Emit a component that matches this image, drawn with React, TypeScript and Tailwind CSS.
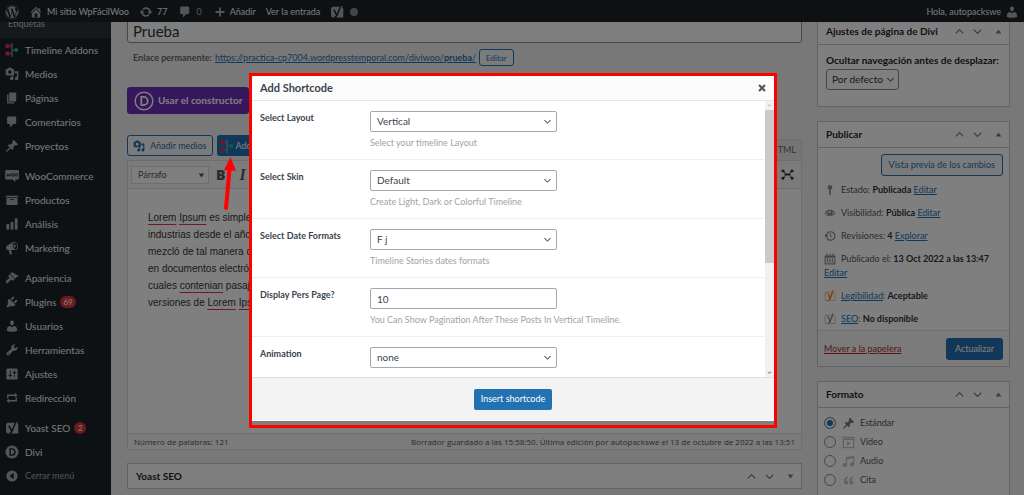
import React from 'react';
import { FaWordpress, FaYoast } from 'react-icons/fa';

const PATHS = {
  home: 'M16 8.5l1.53 1.53-1.06 1.06L10 4.6l-6.47 6.49-1.06-1.06L10 2.5l4 4v-2h2v4zm-6-2.46l6 5.99V18H4v-5.97zM12 17v-5H8v5h4z',
  update:
    'M10.2 3.28c3.53 0 6.43 2.61 6.92 6h2.08l-3.5 4-3.5-4h2.32c-.45-1.97-2.21-3.45-4.32-3.45-1.45 0-2.73.71-3.54 1.78L4.95 5.66C6.23 4.2 8.11 3.28 10.2 3.28zm-.4 13.44c-3.52 0-6.43-2.61-6.92-6H.8l3.5-4c1.17 1.33 2.33 2.67 3.5 4H5.48c.45 1.97 2.21 3.45 4.32 3.45 1.45 0 2.73-.71 3.54-1.78l1.71 1.95c-1.28 1.46-3.15 2.38-5.25 2.38z',
  comment: 'M5 2h9c1.1 0 2 .9 2 2v7c0 1.1-.9 2-2 2h-2l-5 5v-5H5c-1.1 0-2-.9-2-2V4c0-1.1.9-2 2-2z',
  plus: 'M17.5 8.5v3h-6v6h-3v-6h-6v-3h6v-6h3v6z',
  media:
    'M13 11V4c0-.55-.45-1-1-1h-1.67L9 1H5L3.67 3H2c-.55 0-1 .45-1 1v7c0 .55.45 1 1 1h10c.55 0 1-.45 1-1zM7 4.5c1.38 0 2.5 1.12 2.5 2.5S8.38 9.5 7 9.5 4.5 8.38 4.5 7 5.62 4.5 7 4.5zM14 6h5v10.5c0 1.38-1.12 2.5-2.5 2.5S14 17.88 14 16.5s1.12-2.5 2.5-2.5c.17 0 .34.02.5.05V9h-3V6zm-4 8.05V13h2v3.5c0 1.38-1.12 2.5-2.5 2.5S7 17.88 7 16.5 8.12 14 9.5 14c.17 0 .34.02.5.05z',
  page: 'M6 15V2h10v13H6zm-1 1h8v2H3V5h2v11z',
  pin: 'M10.44 3.02l1.82-1.82 6.36 6.35-1.83 1.82c-1.05-.68-2.48-.57-3.41.36l-.75.75c-.92.93-1.04 2.35-.35 3.41l-1.83 1.82-2.41-2.41-2.8 2.79c-.42.42-3.38 2.71-3.8 2.29s1.86-3.39 2.28-3.81l2.79-2.79L4.1 9.36l1.83-1.82c1.05.69 2.48.57 3.4-.36l.75-.75c.93-.92 1.05-2.35.36-3.41z',
  archive: 'M19 4v2H1V4h18zM2 7h16v10H2V7zm11 3V9H7v1h6z',
  chart: 'M18 18V2h-4v16h4zm-6 0V7H8v11h4zm-6 0v-8H2v8h4z',
  megaphone:
    'M18.15 5.94c.46 1.62.38 3.22-.02 4.48-.42 1.28-1.26 2.18-2.3 2.48-.16.06-.26.06-.4.06-.06.02-.12.02-.18.02-.06.02-.14.02-.22.02h-6.8l2.22 5.5c.02.14-.06.26-.14.34-.08.1-.24.16-.34.16H6.95c-.1 0-.26-.06-.34-.16-.08-.08-.16-.2-.14-.34l-1-5.5H4.25l-.02-.02c-.5.06-1.08-.18-1.54-.62s-.88-1.08-1.06-1.88c-.24-.8-.2-1.56-.02-2.2.18-.62.58-1.08 1.06-1.3l.02-.02 9-5.4c.1-.06.18-.1.24-.16.06-.04.14-.08.24-.12.16-.08.28-.12.5-.18 1.04-.3 2.24.1 3.22.98s1.84 2.24 2.26 3.86zm-2.58 5.98h-.02c.4-.1.74-.34 1.04-.7.58-.7.86-1.76.86-3.04 0-.64-.1-1.3-.28-1.98-.34-1.36-1.02-2.5-1.78-3.24s-1.68-1.1-2.46-.88c-.82.22-1.4.96-1.7 2-.32 1.04-.28 2.36.06 3.72.38 1.36 1 2.5 1.8 3.24.78.74 1.62 1.1 2.48.88zm-2.54-7.08c.22-.04.42-.02.62.04.38.16.76.48 1.02 1s.42 1.2.42 1.78c0 .3-.04.56-.12.8-.18.48-.44.84-.86.94-.34.1-.8-.06-1.14-.4s-.64-.86-.78-1.5c-.18-.62-.12-1.24.02-1.72s.48-.84.82-.94z',
  appearance:
    'M14.48 11.06L7.41 3.99l1.5-1.5c.5-.56 2.3-.47 3.51.32 1.21.8 1.43 1.28 2.91 2.1 1.18.64 2.45 1.26 4.45.85zm-.71.71L6.7 4.7 4.93 6.47c-.39.39-.39 1.02 0 1.41l1.06 1.06c.39.39.39 1.03 0 1.42-.6.6-1.43 1.11-2.21 1.69-.35.26-.7.53-1.01.84C1.43 14.23.4 16.08 1.4 17.07c.99 1 2.84-.03 4.18-1.36.31-.31.58-.66.85-1.02.57-.78 1.08-1.61 1.69-2.21.39-.39 1.02-.39 1.41 0l1.06 1.06c.39.39 1.02.39 1.41 0z',
  plugins:
    'M13.11 4.36L9.87 7.6 8 5.73l3.24-3.24c.35-.34 1.05-.2 1.56.32.52.51.66 1.21.31 1.55zm-8 1.77l.91-1.12 9.01 9.01-1.19.84c-.71.71-2.63 1.16-3.82 1.16H6.14L4.9 17.26c-.59.59-1.54.59-2.12 0-.59-.58-.59-1.53 0-2.12l1.24-1.24v-3.88c0-1.13.4-3.19 1.09-3.89zm7.26 3.97l3.24-3.24c.34-.35 1.04-.21 1.55.31.52.51.66 1.21.31 1.55l-3.24 3.25z',
  user: 'M10 9.25c-2.27 0-2.73-3.44-2.73-3.44C7 4.02 7.82 2 9.97 2c2.16 0 2.98 2.02 2.71 3.81 0 0-.41 3.44-2.68 3.44zm0 2.57L12.72 10c2.39 0 4.52 2.33 4.52 4.53v2.49s-3.65 1.13-7.24 1.13c-3.65 0-7.24-1.13-7.24-1.13v-2.49c0-2.25 1.94-4.48 4.47-4.48z',
  tools:
    'M16.68 9.77c-1.34 1.34-3.3 1.67-4.95.99l-5.41 6.52c-.99.99-2.59.99-3.58 0s-.99-2.59 0-3.57l6.52-5.42c-.68-1.65-.35-3.61.99-4.95 1.28-1.28 3.12-1.62 4.72-1.06l-2.89 2.89 2.82 2.82 2.86-2.87c.53 1.58.18 3.39-1.08 4.65zM3.81 16.21c.4.39 1.04.39 1.43 0 .4-.4.4-1.04 0-1.43-.39-.4-1.03-.4-1.43 0-.39.39-.39 1.03 0 1.43z',
  settings:
    'M18 16V4c0-1.1-.9-2-2-2H4c-1.1 0-2 .9-2 2v12c0 1.1.9 2 2 2h12c1.1 0 2-.9 2-2zM8 11h1c.55 0 1 .45 1 1s-.45 1-1 1H8v1.5c0 .28-.22.5-.5.5s-.5-.22-.5-.5V13H6c-.55 0-1-.45-1-1s.45-1 1-1h1V5.5c0-.28.22-.5.5-.5s.5.22.5.5V11zm5-2h-1c-.55 0-1-.45-1-1s.45-1 1-1h1V5.5c0-.28.22-.5.5-.5s.5.22.5.5V7h1c.55 0 1 .45 1 1s-.45 1-1 1h-1v5.5c0 .28-.22.5-.5.5s-.5-.22-.5-.5V9z',
  repeat: 'M5 7v3l-2 1.5V5h11V3l4 3.01L14 9V7H5zm10 6v-3l2-1.5V15H6v2l-4-3.01L6 11v2h9z',
  audio:
    'M6.99 3.08l11.02-2c.55-.08.99.45.99 1V14.5c0 1.94-1.57 3.5-3.5 3.5S12 16.44 12 14.5c0-1.93 1.57-3.5 3.5-3.5.54 0 1.04.14 1.5.35V5.08l-9 2V16c-.24 1.7-1.74 3-3.5 3C2.57 19 1 17.44 1 15.5 1 13.57 2.57 12 4.5 12c.54 0 1.04.14 1.5.35V4.08c0-.55.44-.91.99-1z',
  quote:
    'M9.49 13.22c0-.74-.2-1.38-.61-1.9-.62-.78-1.83-.88-2.53-.72-.29-1.65 1.11-3.75 2.92-4.65L7.88 4c-2.73 1.3-5.42 4.28-4.96 8.05C3.21 14.43 4.59 16 6.54 16c.85 0 1.56-.25 2.12-.75s.83-1.18.83-2.03zm8.05 0c0-.74-.2-1.38-.61-1.9-.63-.78-1.83-.88-2.53-.72-.29-1.65 1.11-3.75 2.92-4.65L15.93 4c-2.73 1.3-5.41 4.28-4.95 8.05.29 2.38 1.66 3.95 3.61 3.95.85 0 1.56-.25 2.12-.75s.83-1.18.83-2.03z',
  video: 'M2 1h16c.55 0 1 .45 1 1v17H1V2c0-.55.45-1 1-1zm1 5v11h14V6H3zm0-3v1.500h2V3H3zm4 0v1.500h2V3H7zm4 0v1.500h2V3h-2zm4 0v1.500h2V3h-2zM7.500 8l6 3.500-6 3.500z',
  key: 'M10 1.500a4 4 0 0 1 1.500 7.700V17L10 19l-1.500-2V9.200A4 4 0 0 1 10 1.500z',
  eye: 'M10 4.500c4 0 7.300 2.300 9 5.500-1.700 3.200-5 5.500-9 5.500S2.700 13.200 1 10c1.700-3.200 5-5.500 9-5.500zM5.800 7.300A9 9 0 0 0 3 10a8.500 8.500 0 0 0 7 3.800A8.500 8.500 0 0 0 17 10a9 9 0 0 0-2.800-2.700 4.700 4.700 0 1 1-8.400 0zM9.500 6.500a1.700 1.700 0 1 0 .1 3.400 1.700 1.700 0 0 0-.1-3.400z',
  history:
    'M11 2a8 8 0 1 1-7.300 11.300l1.900-.8A6 6 0 1 0 5.200 8.500L7.500 9.500 3 13 .8 7l2.500.8A8 8 0 0 1 11 2zm-1 4h1.700v4l2.800 1.700-.9 1.400L10 11V6z',
  calendar: 'M1 4h3V1h2v3h3V1h2v3h3V1h2v3h3v15H1V4zm2 4v9h14V8H3zm2 1h2v7H5V9zm4 0h2v7H9V9zm4 0h2v7h-2V9z',
  expand:
    'M5.500 8L10 8.800 14.500 8v4L10 11.200 5.500 12zM1 17.500v-4.500l1.500 1.300L5.500 12.500l1 1.500-2.300 2 1.300 1.500zM19 17.500h-4.500l1.300-1.500-2.300-2 1-1.500 3 1.800L19 13zM19 2.500V7l-1.500-1.300-3 1.800-1-1.500 2.300-2-1.300-1.500zM1 2.500h4.500L4.200 4l2.300 2-1 1.500-3-1.800L1 7z',
  up: 'M16 14l1.500-1.500L10 5l-7.500 7.500L4 14l6-6z',
  down: 'M4 6L2.500 7.500 10 15l7.500-7.500L16 6l-6 6z',
  close: 'M5.500 2.500L10 7l4.500-4.500 3 3L13 10l4.500 4.500-3 3L10 13l-4.500 4.500-3-3L7 10 2.500 5.500z',
  triUp: 'M10 4l8 12H2z',
  triDown: 'M2 4h16l-8 12z',
};
type IconName = keyof typeof PATHS;

function Icon({ name, className = 'size-3.5' }: { name: IconName; className?: string }) {
  return (
    <svg viewBox="0 0 20 20" fill="currentColor" fillRule="evenodd" className={`shrink-0 ${className}`} aria-hidden="true">
      <path d={PATHS[name]} />
    </svg>
  );
}

function TimelineIcon() {
  return (
    <svg viewBox="0 0 14 14" className="size-3.5 shrink-0" aria-hidden="true">
      <rect x="0.500" y="1" width="4" height="4" rx="0.800" fill="#e0314b" />
      <rect x="0.500" y="8.500" width="4" height="4" rx="0.800" fill="#e0314b" />
      <path d="M7 0v14M5 3h1.500M5 10.500h1.500M7.500 7h2" stroke="#a7aaad" strokeWidth="1" />
      <rect x="9.500" y="5.300" width="3.500" height="3.500" rx="1" fill="#26b59a" />
    </svg>
  );
}

function WooIcon() {
  return (
    <svg viewBox="0 0 20 20" className="size-3.5 shrink-0" aria-hidden="true">
      <path d="M2 1.500h16a1.800 1.800 0 0 1 1.800 1.800v10a1.800 1.800 0 0 1-1.800 1.800h-3.500l.7 3.600-4.700-3.600H2A1.800 1.800 0 0 1 .2 13.300v-10A1.800 1.800 0 0 1 2 1.500z" fill="#a7aaad" />
      <path d="M2.500 6.500l1.300 4 1.700-3 1.200 3 1.300-4" fill="none" stroke="#1d2327" strokeWidth="1.300" />
      <ellipse cx="11.300" cy="8.500" rx="1.600" ry="2" fill="none" stroke="#1d2327" strokeWidth="1.300" />
      <ellipse cx="16" cy="8.500" rx="1.600" ry="2" fill="none" stroke="#1d2327" strokeWidth="1.300" />
    </svg>
  );
}

function YoastSolidIcon() {
  return (
    <svg viewBox="0 0 20 20" className="size-3.5 shrink-0" fill="none" aria-hidden="true">
      <path d="M4.500 2.500H13L18 1l-.5 2.500q1.500.8 1.500 2.500v12H4.500A3 3 0 0 1 1.500 15V5.500a3 3 0 0 1 3-3z" fill="#a7aaad" />
      <path d="M5.500 6.500l3.800 7.500M15.500 1.500L10 14.500q-1.200 3-3.800 3" stroke="#1d2327" strokeWidth="2.200" />
    </svg>
  );
}

function DiviIcon({ className }: { className: string }) {
  return (
    <svg viewBox="0 0 20 20" className={`shrink-0 ${className}`} fill="none" stroke="currentColor" aria-hidden="true">
      <circle cx="10" cy="10" r="8.800" strokeWidth="1.500" />
      <path d="M7.300 5.800h2.200a4.200 4.200 0 0 1 0 8.400H7.300z" strokeWidth="1.800" />
    </svg>
  );
}

function DiviSolidIcon() {
  return (
    <svg viewBox="0 0 20 20" className="size-3.5 shrink-0" fill="none" aria-hidden="true">
      <circle cx="10" cy="10" r="9.300" fill="#a7aaad" />
      <path d="M7.300 5.500h2.400a4.500 4.500 0 0 1 0 9H7.300z" stroke="#1d2327" strokeWidth="2" />
    </svg>
  );
}

function CollapseIcon() {
  return (
    <svg viewBox="0 0 20 20" className="size-3.5 shrink-0" aria-hidden="true">
      <circle cx="10" cy="10" r="8" fill="#a7aaad" />
      <path d="M12.500 5.500v9L6.500 10z" fill="#1d2327" />
    </svg>
  );
}

type MenuEntry = { label: string; icon: React.ReactNode; badge?: number; muted?: boolean };
const MENU: MenuEntry[][] = [
  [
    { label: 'Timeline Addons', icon: <TimelineIcon /> },
    { label: 'Medios', icon: <Icon name="media" /> },
    { label: 'Páginas', icon: <Icon name="page" /> },
    { label: 'Comentarios', icon: <Icon name="comment" /> },
    { label: 'Proyectos', icon: <Icon name="pin" /> },
  ],
  [
    { label: 'WooCommerce', icon: <WooIcon /> },
    { label: 'Productos', icon: <Icon name="archive" /> },
    { label: 'Análisis', icon: <Icon name="chart" /> },
    { label: 'Marketing', icon: <Icon name="megaphone" /> },
  ],
  [
    { label: 'Apariencia', icon: <Icon name="appearance" /> },
    { label: 'Plugins', icon: <Icon name="plugins" />, badge: 69 },
    { label: 'Usuarios', icon: <Icon name="user" /> },
    { label: 'Herramientas', icon: <Icon name="tools" /> },
    { label: 'Ajustes', icon: <Icon name="settings" /> },
    { label: 'Redirección', icon: <Icon name="repeat" /> },
  ],
  [
    { label: 'Yoast SEO', icon: <YoastSolidIcon />, badge: 2 },
    { label: 'Divi', icon: <DiviSolidIcon /> },
    { label: 'Cerrar menú', icon: <CollapseIcon />, muted: true },
  ],
];

function AdminBar() {
  return (
    <header className="relative z-10 flex h-[22px] shrink-0 items-center bg-[#1d2327] px-[5px] pt-px text-[9px] text-[#f0f0f1]">
      <a href="#wp" aria-label="WordPress" className="mr-[10px] text-[#a7aaad]">
        <FaWordpress className="size-3.5" />
      </a>
      <a href="#site" className="mr-[10px] flex items-center gap-1">
        <Icon name="home" className="size-3.5 text-[#a7aaad]" />
        Mi sitio WpFácilWoo
      </a>
      <a href="#updates" className="mr-[11px] flex items-center gap-1">
        <Icon name="update" className="size-3.5 text-[#a7aaad]" />
        77
      </a>
      <a href="#comments" className="mr-3 flex items-center gap-1 text-[#a7aaad]">
        <Icon name="comment" className="size-3.5" />0
      </a>
      <a href="#new" className="mr-[10px] flex items-center gap-1">
        <Icon name="plus" className="size-3 text-[#a7aaad]" />
        Añadir
      </a>
      <a href="#view" className="mr-[10px]">
        Ver la entrada
      </a>
      <a href="#yoast" aria-label="Yoast SEO" className="flex items-center gap-[6px] text-[#a7aaad]">
        <YoastSolidIcon />
        <span className="size-2 rounded-full bg-[#888]" />
      </a>
      <a href="#profile" className="ml-auto flex items-center gap-1">
        Hola, autopackswe
        <Icon name="user" className="size-3.5 text-[#a7aaad]" />
      </a>
    </header>
  );
}

function Sidebar() {
  return (
    <nav className="-mt-3 w-[111px] shrink-0 bg-[#1d2327] text-[10px] text-[#f0f0f1]" aria-label="Menú">
      <div className="flex h-7 items-center bg-[#2c3338] pl-2 text-[9px] text-[#c3c4c7]">
        <a href="#tags">Etiquetas</a>
      </div>
      <div className="flex flex-col gap-[6px]">
        {MENU.map((group, i) => (
          <ul key={i}>
            {group.map((m) => (
              <li key={m.label}>
                <a href="#menu" className={`flex h-6 items-center gap-[6px] pl-[5px] text-[#a7aaad] ${m.muted ? 'text-[9px]' : ''}`}>
                  {m.icon}
                  <span className={m.muted ? '' : 'text-[#f0f0f1]'}>{m.label}</span>
                  {m.badge !== undefined && (
                    <span className="-ml-0.5 flex h-3 min-w-3 items-center justify-center rounded-full bg-[#d63638] px-[3px] text-[8px] text-white">{m.badge}</span>
                  )}
                </a>
              </li>
            ))}
          </ul>
        ))}
      </div>
    </nav>
  );
}

function BoxControls({ collapsed }: { collapsed?: boolean }) {
  return (
    <div className="ml-auto flex items-center gap-[7px] pr-[7px] text-[#787c82]">
      <button type="button" aria-label="Subir">
        <Icon name="up" className="size-[11px]" />
      </button>
      <button type="button" aria-label="Bajar">
        <Icon name="down" className="size-[11px]" />
      </button>
      <button type="button" aria-label="Alternar panel" className="ml-[5px]">
        <Icon name={collapsed ? 'triDown' : 'triUp'} className="size-[7px]" />
      </button>
    </div>
  );
}

function Box({ title, children }: { title: string; children: React.ReactNode }) {
  return (
    <section className="border border-[#c3c4c7] bg-white">
      <div className="flex h-[26px] items-center border-b border-[#c3c4c7] pl-2">
        <h2 className="whitespace-nowrap text-[10px] font-bold text-[#1d2327]">{title}</h2>
        <BoxControls />
      </div>
      {children}
    </section>
  );
}

const link = 'text-[#2271b1] underline';

function Typo({ children }: { children: React.ReactNode }) {
  return <span className="underline decoration-[#e0314b] decoration-1 underline-offset-[3px]">{children}</span>;
}

function Editor() {
  return (
    <main className="flex min-w-0 flex-1 flex-col">
      <input
        aria-label="Título"
        defaultValue="Prueba"
        className="h-[25px] w-full shrink-0 rounded-[3px] border border-[#8c8f94] bg-white px-[5px] text-[15px] leading-5 text-[#2c3338]"
      />
      <div className="mt-[6px] flex h-[17px] items-center gap-[3px] pl-[6px] text-[9px] text-[#646970]">
        <b>Enlace permanente:</b>
        <a href="#permalink" className={link}>
          https://practica-cp7004.wordpresstemporal.com/diviwoo/<b>prueba</b>/
        </a>
        <button type="button" className="h-[17px] rounded-[3px] border border-[#2271b1] bg-[#f6f7f7] px-[6px] text-[8px] text-[#2271b1]">
          Editar
        </button>
      </div>
      <button type="button" className="mt-[21px] flex h-[27px] items-center gap-1 self-start rounded-[3px] bg-[#6c2eb9] px-[7px] text-[10px] font-bold text-white">
        <DiviIcon className="size-5" />
        Usar el constructor
      </button>
      <div className="mt-[21px] flex gap-1">
        <button type="button" className="flex h-[21px] items-center gap-[5px] rounded-[3px] border border-[#2271b1] bg-[#f6f7f7] px-[5px] text-[9px] text-[#2271b1]">
          <Icon name="media" className="size-3" />
          Añadir medios
        </button>
        <button type="button" className="flex h-[21px] w-24 items-center gap-[2px] rounded-[3px] bg-[#2271b1] pl-[3px] text-[9px] text-white">
          <TimelineIcon />
          Add
        </button>
        <button type="button" className="ml-auto mt-1 h-[21px] border border-b-0 border-[#dcdcde] bg-[#ebebeb] px-[5px] text-[9px] text-[#646970]">
          HTML
        </button>
      </div>
      <div className="flex flex-col border border-[#dcdcde] bg-white">
        <div className="flex h-7 items-center border-b border-[#dcdcde] bg-[#f6f7f7] pl-[3px] pr-[7px] text-[#50575e]">
          <div className="relative">
            <select aria-label="Formato de párrafo" className="block h-[18px] w-[78px] appearance-none border border-[#dcdcde] bg-white pl-[6px] text-[9px] text-[#50575e]">
              <option>Párrafo</option>
            </select>
            <Icon name="triDown" className="pointer-events-none absolute right-1 top-[6px] size-[7px]" />
          </div>
          <button type="button" className="ml-[7px] font-['Open_Sans',sans-serif] text-sm font-extrabold">B</button>
          <button type="button" className="ml-[14px] font-['Liberation_Serif',serif] text-base font-bold italic">I</button>
          <button type="button" aria-label="Pantalla completa" className="ml-auto text-[#1d2327]">
            <Icon name="expand" className="size-[13px]" />
          </button>
        </div>
        <p className="h-[244px] whitespace-nowrap px-5 pt-5 font-['Liberation_Sans',sans-serif] text-[10px] leading-[17px] text-[#333]">
          <Typo>Lorem</Typo> <Typo>Ipsum</Typo> es simplem
          <br />
          industrias desde el año
          <br />
          mezcló de tal manera q
          <br />
          en documentos electrón
          <br />
          cuales <Typo>contenian</Typo> pasaje
          <br />
          versiones de <Typo>Lorem</Typo> <Typo>Ips</Typo>
        </p>
        <div className="flex h-4 items-center justify-between border-t border-[#dcdcde] bg-[#f6f7f7] px-[6px] font-['Open_Sans',sans-serif] text-[8px] text-[#50575e]">
          <span>Número de palabras: 121</span>
          <span>Borrador guardado a las 15:58:50. Última edición por autopackswe el 13 de octubre de 2022 a las 13:51</span>
        </div>
      </div>
      <section className="mt-[13px] flex h-[26px] shrink-0 items-center border border-[#c3c4c7] bg-white pl-2">
        <h2 className="text-[10px] font-bold text-[#1d2327]">Yoast SEO</h2>
        <BoxControls collapsed />
      </section>
    </main>
  );
}

function PublishRow({ icon, children }: { icon: React.ReactNode; children: React.ReactNode }) {
  return (
    <li className="flex items-center gap-[5px]">
      {icon}
      <span className="whitespace-nowrap">{children}</span>
    </li>
  );
}

const strong = 'font-bold text-[#2c3338]';

function SideColumn() {
  return (
    <aside className="flex w-[193px] shrink-0 flex-col gap-[14px] text-[9px] text-[#50575e]">
      <Box title="Ajustes de página de Divi">
        <div className="h-[61px] px-2 pt-[9px]">
          <label htmlFor="hide-nav" className="block whitespace-nowrap text-[10px] leading-3 font-bold text-[#1d2327]">
            Ocultar navegación antes de desplazar:
          </label>
          <div className="relative mt-[3px] w-[73px]">
            <select id="hide-nav" className="block h-[21px] w-full appearance-none rounded-[3px] border border-[#8c8f94] bg-white pl-[5px] text-[10px] text-[#2c3338]">
              <option>Por defecto</option>
            </select>
            <Icon name="down" className="pointer-events-none absolute right-1 top-[6px] size-[9px]" />
          </div>
        </div>
      </Box>
      <Box title="Publicar">
        <div className="flex justify-end px-[6px] pt-[6px]">
          <button type="button" className="h-[22px] rounded-[3px] border border-[#2271b1] bg-[#f6f7f7] px-[7px] text-[9px] text-[#2271b1]">
            Vista previa de los cambios
          </button>
        </div>
        <ul className="flex flex-col gap-[9px] px-[6px] pt-[7px] leading-[14px]">
          <PublishRow icon={<Icon name="key" className="size-3 text-[#8c8f94]" />}>
            Estado: <b className={strong}>Publicada</b> <a href="#status" className={link}>Editar</a>
          </PublishRow>
          <PublishRow icon={<Icon name="eye" className="size-3 text-[#8c8f94]" />}>
            Visibilidad: <b className={strong}>Pública</b> <a href="#visibility" className={link}>Editar</a>
          </PublishRow>
          <PublishRow icon={<Icon name="history" className="size-3 text-[#8c8f94]" />}>
            Revisiones: <b className={strong}>4</b> <a href="#revisions" className={link}>Explorar</a>
          </PublishRow>
          <li>
            <div className="flex items-center gap-[5px]">
              <Icon name="calendar" className="size-3 text-[#8c8f94]" />
              <span className="whitespace-nowrap">
                Publicado el: <b className={strong}>13 Oct 2022 a las 13:47</b>
              </span>
            </div>
            <a href="#date" className={`block ${link}`}>Editar</a>
          </li>
          <PublishRow icon={<FaYoast className="size-3 text-[#ee7c1b]" />}>
            <a href="#readability" className={link}>Legibilidad</a>: <b className={strong}>Aceptable</b>
          </PublishRow>
          <PublishRow icon={<FaYoast className="size-3 text-[#888]" />}>
            <a href="#seo" className={link}>SEO</a>: <b className={strong}>No disponible</b>
          </PublishRow>
        </ul>
        <div className="mt-1 flex h-9 items-center justify-between border-t border-[#dcdcde] bg-[#f6f7f7] px-[6px]">
          <a href="#trash" className="text-[#b32d2e] underline">Mover a la papelera</a>
          <button type="button" className="h-[22px] rounded-[3px] bg-[#2271b1] px-[9px] text-[9px] text-white">
            Actualizar
          </button>
        </div>
      </Box>
      <Box title="Formato">
        <fieldset className="flex h-[100px] flex-col gap-[5px] px-[6px] pt-2">
          <FormatOption icon="pin" label="Estándar" checked />
          <FormatOption icon="video" label="Vídeo" />
          <FormatOption icon="audio" label="Audio" />
          <FormatOption icon="quote" label="Cita" />
        </fieldset>
      </Box>
    </aside>
  );
}

function FormatOption({ icon, label, checked }: { icon: IconName; label: string; checked?: boolean }) {
  return (
    <label className="flex h-[14px] items-center text-[9px]">
      <input
        type="radio"
        name="format"
        defaultChecked={checked}
        className="mr-[6px] size-3 shrink-0 appearance-none rounded-full border border-[#8c8f94] bg-white checked:bg-[#2271b1] checked:shadow-[inset_0_0_0_2px_white]"
      />
      <Icon name={icon} className={checked ? 'mr-[5px] size-[13px] text-[#787c82]' : 'mr-[5px] size-[13px] text-[#c3c4c7]'} />
      {label}
    </label>
  );
}

type Field = { id: string; label: string; value: string; help: string; text?: boolean };
const FIELDS: Field[] = [
  { id: 'layout', label: 'Select Layout', value: 'Vertical', help: 'Select your timeline Layout' },
  { id: 'skin', label: 'Select Skin', value: 'Default', help: 'Create Light, Dark or Colorful Timeline' },
  { id: 'date', label: 'Select Date Formats', value: 'F j', help: 'Timeline Stories dates formats' },
  { id: 'per-page', label: 'Display Pers Page?', value: '10', help: 'You Can Show Pagination After These Posts In Vertical Timeline.', text: true },
  { id: 'animation', label: 'Animation', value: 'none', help: '' },
];

const control = 'block h-[21px] w-full appearance-none rounded-[2px] border border-[#a5a8ab] bg-white px-[6px] text-[10px] text-[#3c434a]';

function ShortcodeDialog() {
  return (
    <div className="absolute inset-0 z-20 flex items-start justify-center bg-black/50 pl-0.5 pt-[73px]">
      <div role="dialog" aria-labelledby="dialog-title" className="w-[528px] border-[3px] border-[#ff0000] pb-1">
        <div className="flex h-[25px] items-center justify-between border-b border-[#e5e5e5] bg-[#fcfcfc] pl-2 pr-[7px]">
          <h1 id="dialog-title" className="text-[11px] font-bold text-[#3c434a]">Add Shortcode</h1>
          <button type="button" aria-label="Cerrar" className="text-[#50575e]">
            <Icon name="close" className="size-[10px]" />
          </button>
        </div>
        <div className="flex h-[276px] bg-white">
          <div className="flex-1 overflow-hidden">
            {FIELDS.map((f) => (
              <div key={f.id} className="flex h-[59px] border-b border-[#f0f0f0] pl-2 pt-[10px]">
                <label htmlFor={f.id} className="w-[110px] shrink-0 text-[9px] leading-[14px] font-bold text-[#3c434a]">
                  {f.label}
                </label>
                <div>
                  <div className="relative w-[187px]">
                    {f.text ? (
                      <input id={f.id} defaultValue={f.value} className={control} />
                    ) : (
                      <>
                        <select id={f.id} className={control}>
                          <option>{f.value}</option>
                        </select>
                        <Icon name="down" className="pointer-events-none absolute right-[5px] top-[6px] size-[9px] text-[#50575e]" />
                      </>
                    )}
                  </div>
                  <p className="mt-1 whitespace-nowrap text-[9px] leading-[14px] text-[#a0a3a6]">{f.help}</p>
                </div>
              </div>
            ))}
          </div>
          <div className="flex w-[9px] flex-col bg-[#f1f1f1]" aria-hidden="true">
            <span className="flex h-[9px] items-center justify-center text-[#a3a3a3]">
              <Icon name="up" className="size-[5px]" />
            </span>
            <span className="h-[153px] bg-[#c9c9c9]" />
            <span className="mt-auto flex h-[10px] items-center justify-center text-[#505050]">
              <Icon name="down" className="size-[5px]" />
            </span>
          </div>
        </div>
        <div className="flex h-11 items-center justify-center border-b border-t border-b-white border-t-[#e0e0e0] bg-[#f3f3f3]">
          <button type="button" className="h-[21px] rounded-[2px] bg-[#2271b1] px-[7px] text-[9px] text-white">
            Insert shortcode
          </button>
        </div>
      </div>
      <svg viewBox="0 0 14 54" className="absolute left-[223px] top-[157px] h-[54px] w-[14px]" aria-hidden="true">
        <path d="M3 51L6.500 12" stroke="#ff0000" strokeWidth="4" strokeLinecap="round" />
        <path d="M7.500 0L13 14 1 13z" fill="#ff0000" />
      </svg>
    </div>
  );
}

export default function App() {
  return (
    <div className="relative flex h-screen flex-col overflow-hidden bg-[#f0f0f1] font-['Lato',sans-serif]">
      <AdminBar />
      <div className="flex min-h-0 flex-1">
        <Sidebar />
        <div className="-mt-1 flex min-w-0 flex-1 gap-[15px] pl-4 pr-[14px]">
          <Editor />
          <SideColumn />
        </div>
      </div>
      <ShortcodeDialog />
    </div>
  );
}
